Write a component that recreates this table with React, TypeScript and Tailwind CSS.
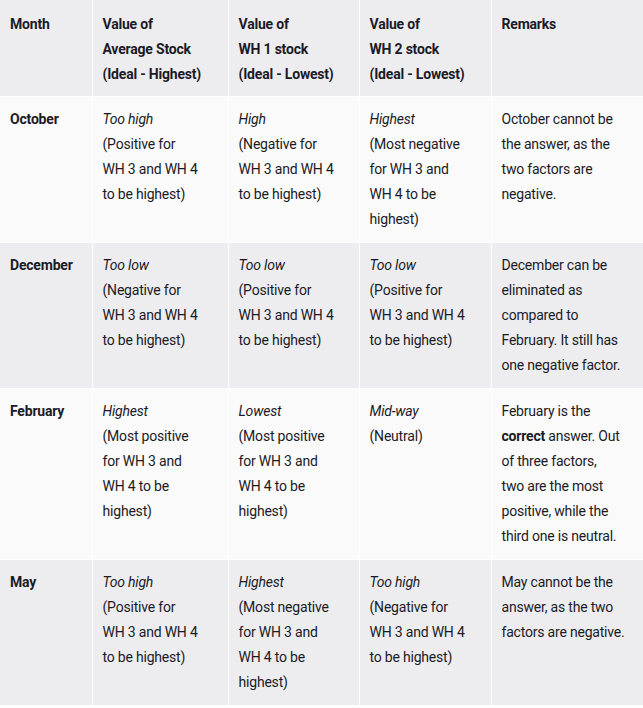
import React from "react";

type Cell = React.ReactNode[];

const rows: { month: string; bg: string; cells: Cell[] }[] = [
  {
    month: "October",
    bg: "bg-[#fafafa]",
    cells: [
      [<i key="i">Too high</i>, "(Positive for", "WH 3 and WH 4", "to be highest)"],
      [<i key="i">High</i>, "(Negative for", "WH 3 and WH 4", "to be highest)"],
      [<i key="i">Highest</i>, "(Most negative", "for WH 3 and", "WH 4 to be", "highest)"],
      ["October cannot be", "the answer, as the", "two factors are", "negative."],
    ],
  },
  {
    month: "December",
    bg: "bg-[#ededf0]",
    cells: [
      [<i key="i">Too low</i>, "(Negative for", "WH 3 and WH 4", "to be highest)"],
      [<i key="i">Too low</i>, "(Positive for", "WH 3 and WH 4", "to be highest)"],
      [<i key="i">Too low</i>, "(Positive for", "WH 3 and WH 4", "to be highest)"],
      ["December can be", "eliminated as", "compared to", "February. It still has", "one negative factor."],
    ],
  },
  {
    month: "February",
    bg: "bg-[#fafafa]",
    cells: [
      [<i key="i">Highest</i>, "(Most positive", "for WH 3 and", "WH 4 to be", "highest)"],
      [<i key="i">Lowest</i>, "(Most positive", "for WH 3 and", "WH 4 to be", "highest)"],
      [<i key="i">Mid-way</i>, "(Neutral)"],
      [
        "February is the",
        <span key="c">
          <b>correct</b> answer. Out
        </span>,
        "of three factors,",
        "two are the most",
        "positive, while the",
        "third one is neutral.",
      ],
    ],
  },
  {
    month: "May",
    bg: "bg-[#ededf0]",
    cells: [
      [<i key="i">Too high</i>, "(Positive for", "WH 3 and WH 4", "to be highest)"],
      [<i key="i">Highest</i>, "(Most negative", "for WH 3 and", "WH 4 to be", "highest)"],
      [<i key="i">Too high</i>, "(Negative for", "WH 3 and WH 4", "to be highest)"],
      ["May cannot be the", "answer, as the two", "factors are negative."],
    ],
  },
];

const headers: string[][] = [
  ["Month"],
  ["Value of", "Average Stock", "(Ideal - Highest)"],
  ["Value of", "WH 1 stock", "(Ideal - Lowest)"],
  ["Value of", "WH 2 stock", "(Ideal - Lowest)"],
  ["Remarks"],
];

function Lines({ lines }: { lines: React.ReactNode[] }) {
  return (
    <>
      {lines.map((l, i) => (
        <div key={i} className="whitespace-nowrap">
          {l}
        </div>
      ))}
    </>
  );
}

export default function App() {
  return (
    <div
      className="w-[643px] h-[708px] overflow-hidden bg-white text-[#1b1b26]"
      style={{ fontFamily: "Roboto, 'Liberation Sans', sans-serif" }}
    >
      <table className="w-[643px] table-fixed border-collapse text-[14px] leading-[25px] tracking-[-0.2px]">
        <colgroup>
          <col className="w-[92px]" />
          <col className="w-[136px]" />
          <col className="w-[131px]" />
          <col className="w-[132px]" />
          <col />
        </colgroup>
        <thead>
          <tr className="bg-[#ededf0]">
            {headers.map((h, i) => (
              <th
                key={i}
                className="border border-white border-t-0 px-[10px] pt-[12px] pb-[9px] text-left align-top font-bold first:border-l-0 last:border-r-0"
              >
                <Lines lines={h} />
              </th>
            ))}
          </tr>
        </thead>
        <tbody>
          {rows.map((r) => (
            <tr key={r.month} className={r.bg}>
              <td className="border border-white border-l-0 px-[10px] pt-[10px] pb-[10px] align-top font-bold">
                {r.month}
              </td>
              {r.cells.map((c, i) => (
                <td
                  key={i}
                  className="border border-white px-[10px] pt-[10px] pb-[10px] align-top last:border-r-0"
                >
                  <Lines lines={c} />
                </td>
              ))}
            </tr>
          ))}
        </tbody>
      </table>
    </div>
  );
}
